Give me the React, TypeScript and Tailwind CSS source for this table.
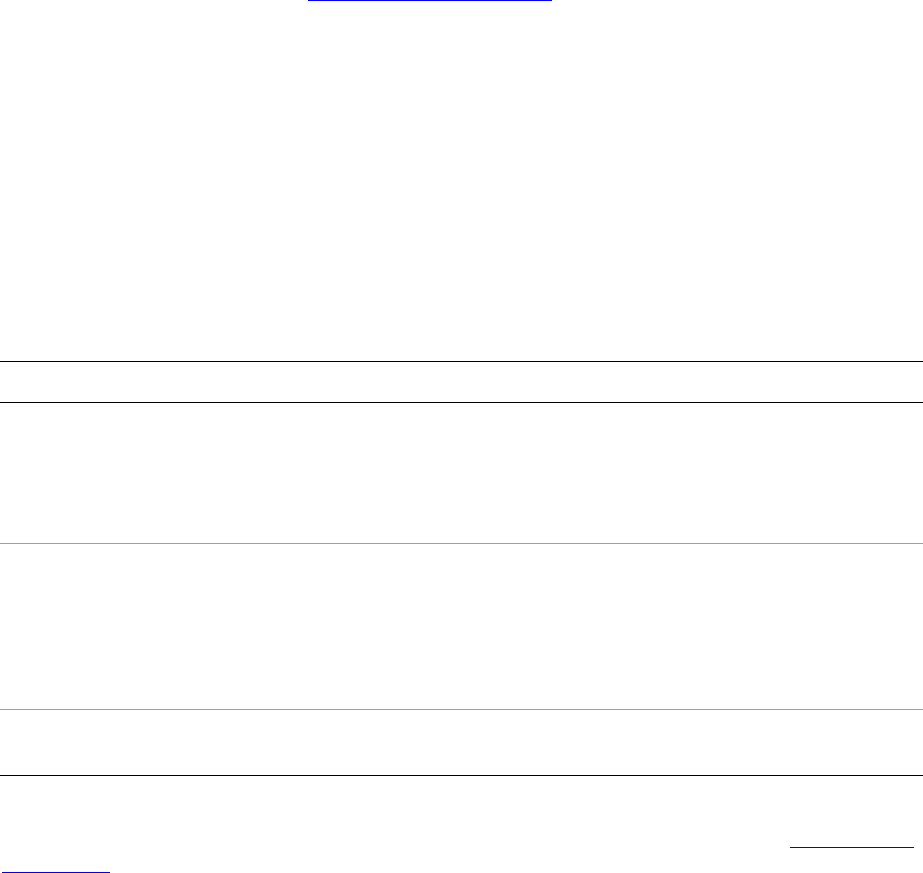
export default function App() {
  return (
    <div className="min-h-[873px] w-full bg-white font-['Liberation_Sans',Arial,sans-serif]">
      {/* link underline peeking in at the top */}
      <div className="flex pl-[308px]">
        <div className="h-px w-[244px] bg-[#0000ee]" />
      </div>

      {/* table rules */}
      <div className="mt-[360px] flex flex-col border-t border-black">
        <div className="h-[41px] border-b border-black" />
        <div className="h-[141px] border-b border-[#a0a0a0]" />
        <div className="h-[166px] border-b border-[#a0a0a0]" />
        <div className="h-[66px] border-b border-black" />
      </div>

      {/* footer links */}
      <div className="mt-[71px] flex justify-end pr-[9px]">
        <div className="h-px w-[124px] bg-[#0000ee]" />
      </div>
      <div className="mt-6 flex pl-[2px]">
        <div className="h-px w-[108px] bg-[#0000ee]" />
      </div>
    </div>
  );
}
